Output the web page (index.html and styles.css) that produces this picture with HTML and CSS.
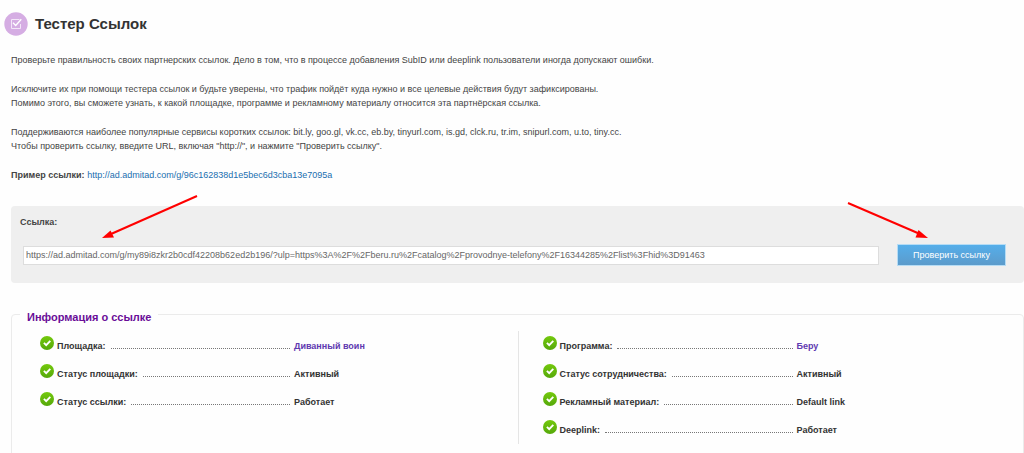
FILE: index.html
```html
<!DOCTYPE html>
<html lang="ru">
<head>
<meta charset="utf-8">
<title>Тестер Ссылок</title>
<link rel="stylesheet" href="styles.css">
</head>
<body>
<svg class="defs" width="0" height="0" aria-hidden="true">
  <defs>
    <linearGradient id="green" x1="0" y1="0" x2="0" y2="1">
      <stop offset="0" stop-color="#74c90d"/>
      <stop offset="1" stop-color="#55a80a"/>
    </linearGradient>
    <symbol id="ok" viewBox="0 0 14 14">
      <circle cx="7" cy="7" r="7" fill="url(#green)"/>
      <path d="M3.9 6.9 6.2 9.1 10.3 4.9" fill="none" stroke="#fff" stroke-width="1.9"/>
    </symbol>
  </defs>
</svg>
<main class="page">
  <header class="head">
    <svg class="head-icon" viewBox="0 0 24 24" aria-hidden="true">
      <circle cx="12" cy="12" r="11.7" fill="#d5ade3"/>
      <path d="M15.500 7.500H7.500V16.500H16.500V12" fill="none" stroke="#f3e6f8" stroke-width="1"/>
      <path d="M9 10.800 11.700 13.500 17.300 7.300" fill="none" stroke="#fff" stroke-width="1.3"/>
    </svg>
    <h1 class="title">Тестер Ссылок</h1>
  </header>

  <section class="intro">
    <p>Проверьте правильность своих партнерских ссылок. Дело в том, что в процессе добавления SubID или deeplink пользователи иногда допускают ошибки.</p>
    <p>Исключите их при помощи тестера ссылок и будьте уверены, что трафик пойдёт куда нужно и все целевые действия будут зафиксированы.<br>Помимо этого, вы сможете узнать, к какой площадке, программе и рекламному материалу относится эта партнёрская ссылка.</p>
    <p>Поддерживаются наиболее популярные сервисы коротких ссылок: bit.ly, goo.gl, vk.cc, eb.by, tinyurl.com, is.gd, clck.ru, tr.im, snipurl.com, u.to, tiny.cc.<br>Чтобы проверить ссылку, введите URL, включая "http://", и нажмите "Проверить ссылку".</p>
    <p><b>Пример ссылки:</b> <a class="example" href="#">http://ad.admitad.com/g/96c162838d1e5bec6d3cba13e7095a</a></p>
  </section>

  <form class="panel">
    <label class="panel-label" for="url">Ссылка:</label>
    <div class="panel-row">
      <input class="url" id="url" type="text" value="https://ad.admitad.com/g/my89i8zkr2b0cdf42208b62ed2b196/?ulp=https%3A%2F%2Fberu.ru%2Fcatalog%2Fprovodnye-telefony%2F16344285%2Flist%3Fhid%3D91463">
      <button class="check" type="button">Проверить ссылку</button>
    </div>
    <svg class="arrow arrow-left" viewBox="0 0 96 44" aria-hidden="true">
      <path d="M95 1 9 39" stroke="#f00" stroke-width="2"/>
      <path d="M0 43 8.500 35.500 12 42.500Z" fill="#f00"/>
    </svg>
    <svg class="arrow arrow-right" viewBox="0 0 80 37" aria-hidden="true">
      <path d="M0 1 72 32" stroke="#f00" stroke-width="2"/>
      <path d="M80 36 70.500 28 67.500 35.500Z" fill="#f00"/>
    </svg>
  </form>

  <fieldset class="info">
    <legend class="legend">Информация о ссылке</legend>
    <div class="columns">
      <dl class="list">
        <div class="item"><dt><svg class="ok"><use href="#ok"/></svg>Площадка:</dt><dd><a class="value-link" href="#">Диванный воин</a></dd></div>
        <div class="item"><dt><svg class="ok"><use href="#ok"/></svg>Статус площадки:</dt><dd>Активный</dd></div>
        <div class="item"><dt><svg class="ok"><use href="#ok"/></svg>Статус ссылки:</dt><dd>Работает</dd></div>
      </dl>
      <dl class="list">
        <div class="item"><dt><svg class="ok"><use href="#ok"/></svg>Программа:</dt><dd><a class="value-link" href="#">Беру</a></dd></div>
        <div class="item"><dt><svg class="ok"><use href="#ok"/></svg>Статус сотрудничества:</dt><dd>Активный</dd></div>
        <div class="item"><dt><svg class="ok"><use href="#ok"/></svg>Рекламный материал:</dt><dd>Default link</dd></div>
        <div class="item"><dt><svg class="ok"><use href="#ok"/></svg>Deeplink:</dt><dd>Работает</dd></div>
      </dl>
    </div>
  </fieldset>
</main>
</body>
</html>
```
FILE: styles.css
```css
* { box-sizing: border-box; }

body {
  margin: 0;
  background: #fefefe;
  color: #444;
  font: 9px/14px "Liberation Sans", Arial, sans-serif;
}

a { text-decoration: none; }
.defs { position: absolute; }

.page { padding: 12px 0 0 11px; }

.head {
  display: flex;
  align-items: center;
  gap: 7px;
  margin-left: -7px;
}
.head-icon { width: 24px; height: 24px; }
.title { margin: 0; color: #333; font-size: 15px; line-height: 24px; }

.intro {
  display: flex;
  flex-direction: column;
  gap: 15px;
  margin-top: 17px;
}
.intro p { margin: 0; }
.example { color: #1a6fb0; }

.panel {
  position: relative;
  margin-top: 24px;
  padding: 9px 18px 17px 12px;
  border-radius: 4px;
  background: #efefef;
}
.panel-label { display: block; margin-left: -3px; font-weight: bold; }
.panel-row {
  display: flex;
  align-items: center;
  gap: 18px;
  margin-top: 15px;
}
.url {
  flex: 1;
  min-width: 0;
  height: 19px;
  padding: 0 2px;
  border: 1px solid #ddd;
  background: #fff;
  color: #666;
  font: inherit;
}
.check {
  width: 109px;
  height: 22px;
  padding: 0;
  border: 1px solid #b5dcf5;
  background: linear-gradient(#55aeea, #5c9bcb);
  color: #fff;
  font: inherit;
}

.arrow { position: absolute; overflow: visible; }
.arrow-left { left: 91px; top: -11px; width: 96px; height: 44px; }
.arrow-right { right: 96px; top: -4px; width: 80px; height: 37px; }

.info {
  margin: 22px 0 0;
  padding: 7px 0 24px;
  border: 1px solid #ebebeb;
  border-radius: 4px;
}
.legend {
  margin-left: 8px;
  padding: 5px 7px 0;
  color: #6a0d98;
  font-size: 11px;
  font-weight: bold;
}
.columns { display: grid; grid-template-columns: 1fr 1fr; }
.list { margin: 0; padding: 1px 0 0 28px; }
.list + .list { padding-left: 24px; border-left: 1px solid #e5e5e5; }
.item {
  display: flex;
  height: 28px;
  color: #333;
  font-weight: bold;
}
.item dt {
  display: flex;
  flex: 0 0 254px;
  align-items: center;
  height: 28px;
}
.item dt::after {
  content: "";
  flex: 1;
  margin: 4px 4px 0 5px;
  border-top: 1px dotted #777;
}
.item dd { margin: 0; line-height: 28px; }
.ok { width: 14px; height: 14px; margin: 0 3px 6px 0; }
.value-link { color: #6039b0; }
```
